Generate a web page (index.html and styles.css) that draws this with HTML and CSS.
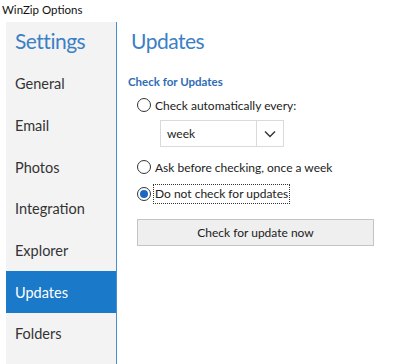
FILE: index.html
```html
<!DOCTYPE html>
<html>
<head>
<meta charset="utf-8">
<link rel="stylesheet" href="styles.css">
</head>
<body>
<div class="titlebar">WinZip Options</div>
<div class="main">
  <nav class="sidebar">
    <div class="side-title">Settings</div>
    <div class="item">General</div>
    <div class="item">Email</div>
    <div class="item">Photos</div>
    <div class="item">Integration</div>
    <div class="item">Explorer</div>
    <div class="item active">Updates</div>
    <div class="item">Folders</div>
  </nav>
  <section class="content">
    <h1 class="page-title">Updates</h1>
    <div class="group-label">Check for Updates</div>
    <div class="radio-row"><span class="radio"></span><span class="label">Check automatically every:</span></div>
    <div class="select">
      <span class="select-value">week</span>
      <span class="select-arrow">
        <svg width="12" height="8" viewBox="0 0 12 8"><path d="M1 1.5 L6 6.5 L11 1.5" fill="none" stroke="#333" stroke-width="1.4"/></svg>
      </span>
    </div>
    <div class="radio-row r2"><span class="radio"></span><span class="label">Ask before checking, once a week</span></div>
    <div class="radio-row r3"><span class="radio checked"></span><span class="label focus">Do not check for updates</span></div>
    <button class="btn">Check for update now</button>
  </section>
</div>
</body>
</html>
```
FILE: styles.css
```css
* { box-sizing: border-box; }
html, body { margin: 0; padding: 0; background: #fff; }
body {
  width: 409px;
  height: 364px;
  overflow: hidden;
  font-family: Lato, "Open Sans", sans-serif;
  color: #222;
}
.titlebar {
  height: 22px;
  padding: 3px 0 0 2px;
  font-size: 11.5px;
  color: #111;
}
.main {
  display: flex;
  height: 342px;
}
.sidebar {
  margin-left: 6px;
  width: 111px;
  background: #f3f3f3;
  border-right: 1px solid #4a8ed2;
  display: flex;
  flex-direction: column;
}
.side-title {
  height: 41px;
  padding: 4px 0 0 9px;
  font-size: 21px;
  letter-spacing: -0.5px;
  line-height: 30px;
  color: #3b80c6;
}
.item {
  height: 41.7px;
  padding-left: 9px;
  display: flex;
  align-items: center;
  font-size: 14.5px;
  color: #333;
}
.item.active {
  background: #1a79c8;
  color: #fff;
}
.content {
  flex: 1;
  padding-left: 11px;
}
.page-title {
  margin: 0;
  padding: 4px 0 0 3px;
  height: 52px;
  font-size: 21px;
  letter-spacing: -0.5px;
  line-height: 30px;
  font-weight: normal;
  color: #3b80c6;
}
.group-label {
  font-size: 11.5px;
  font-weight: bold;
  color: #2f6db5;
  height: 22px;
  line-height: 16px;
}
.radio-row {
  display: flex;
  align-items: center;
  height: 18px;
  margin-left: 9px;
  font-size: 12px;
  color: #222;
}
.radio {
  width: 14px;
  height: 14px;
  border: 1px solid #333;
  border-radius: 50%;
  background: #fff;
  margin-right: 4px;
  flex: none;
  display: flex;
  align-items: center;
  justify-content: center;
}
.radio.checked::after {
  content: "";
  width: 8px;
  height: 8px;
  border-radius: 50%;
  background: #1b68c4;
}
.label.focus {
  outline: 1px dotted #333;
  padding: 1px 1px 2px 1px;
  margin-left: -1px;
}
.select {
  margin: 6px 0 0 32px;
  width: 124px;
  height: 27px;
  border: 1px solid #dadada;
  background: #fff;
  display: flex;
  align-items: center;
  font-size: 12px;
}
.select-value {
  flex: 1;
  padding-left: 6px;
}
.select-arrow {
  width: 27px;
  height: 100%;
  border-left: 1px solid #dadada;
  display: flex;
  align-items: center;
  justify-content: center;
}
.r2 { margin-top: 11px; }
.r3 { margin-top: 9px; }
.btn {
  display: block;
  margin: 16px 0 0 9px;
  width: 237px;
  height: 27px;
  background: #efefef;
  border: 1px solid #c4c4c4;
  font-family: inherit;
  font-size: 12px;
  color: #222;
  padding: 0;
}
```
